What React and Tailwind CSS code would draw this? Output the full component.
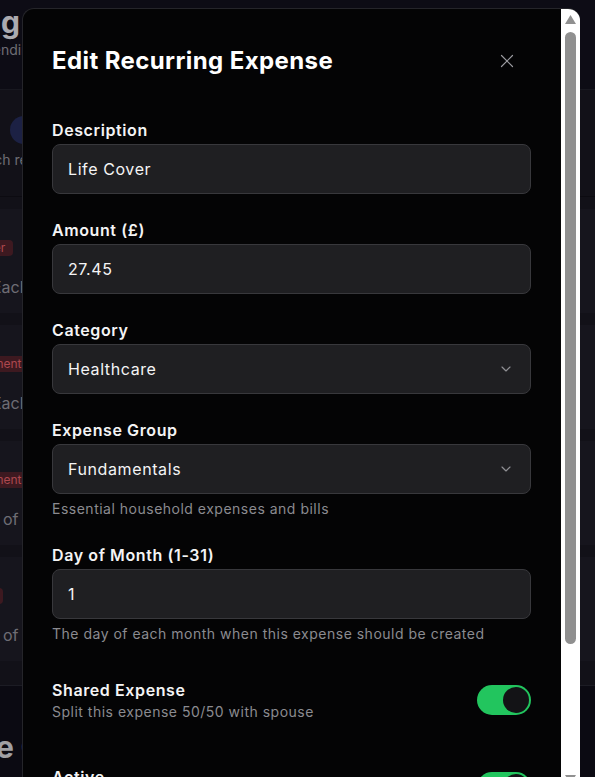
import { X, ChevronDown } from 'lucide-react'

const inputCls =
  'block h-[50px] w-full rounded-lg border border-[#38383c] bg-[#1f1f22] px-[15px] text-base tracking-[0.6px] text-[#f4f4f5] outline-none'

function Field({ label, hint, children }) {
  return (
    <div>
      <label className="block text-base font-semibold leading-6 tracking-[0.6px] text-[#f4f4f5]">{label}</label>
      <div className="mt-[2px]">{children}</div>
      {hint && <p className="mt-[5px] text-sm leading-5 tracking-[0.5px] text-[#8b8b90]">{hint}</p>}
    </div>
  )
}

function SelectBox({ value }) {
  return (
    <button type="button" className={`${inputCls} flex items-center justify-between text-left`}>
      <span>{value}</span>
      <ChevronDown className="mr-[1px] h-4 w-4 text-[#8f8f94]" strokeWidth={1.75} />
    </button>
  )
}

function Toggle({ on }) {
  return (
    <button
      type="button"
      className={`flex h-[30px] w-[54px] shrink-0 items-center rounded-full p-[2px] ${on ? 'bg-[#22c55e]' : 'bg-[#3f3f46]'}`}
    >
      <span className={`h-[26px] w-[26px] rounded-full bg-[#131316] ${on ? 'ml-auto' : ''}`} />
    </button>
  )
}

function ToggleRow({ label, hint, on, className = '' }) {
  return (
    <div className={`flex items-center justify-between ${className}`}>
      <div>
        <p className="text-base font-semibold leading-6 tracking-[0.6px] text-[#f4f4f5]">{label}</p>
        <p className="text-sm leading-5 tracking-[0.5px] text-[#8b8b90]">{hint}</p>
      </div>
      <Toggle on={on} />
    </div>
  )
}

const rows = [
  { group: 'Summer', text: 'Each month' },
  { group: 'Fundamentals', text: 'Each month' },
  { group: 'Fundamentals', text: '1 of each month' },
  { group: 'Family', text: '1 of each month' },
]

function BackgroundPage() {
  return (
    <div className="min-h-screen bg-[#0e0d17]">
      <header className="h-[90px] border-b border-[#1f1e28] bg-[#11101b] pt-[4px]">
        <div className="flex w-[20px] justify-end">
          <h1 className="whitespace-nowrap text-[30px] font-bold leading-9 text-[#d6d6dc]">Recurring</h1>
        </div>
        <div className="flex w-[38px] justify-end">
          <p className="whitespace-nowrap text-sm leading-5 text-[#8a8992]">Track spending</p>
        </div>
      </header>
      <div className="bg-[#17161f] pb-[24px]">
        <div className="flex h-[107px] flex-col justify-center border-b border-[#0f0e16]">
          <div className="ml-[10px] h-[28px] w-[28px] rounded-full bg-[#232a55]" />
          <p className="-ml-[36px] mt-[6px] whitespace-nowrap text-sm text-[#8a8992]">Search recurring</p>
        </div>
        <div className="mt-[12px] flex flex-col gap-[12px]">
          {rows.map((r, i) => (
            <div key={i} className="h-[104px] bg-[#1c1b25] pt-[25px]">
              <span className="-ml-[50px] inline-block whitespace-nowrap rounded bg-[#4d2029] px-2 text-xs leading-4 text-[#d85a62]">
                {r.group}
              </span>
              <p className="-ml-[8px] mt-[17px] whitespace-nowrap text-base text-[#8a8992]">{r.text}</p>
            </div>
          ))}
        </div>
      </div>
      <section className="border-t border-[#24232d] pt-[43px]">
        <h2 className="-ml-[112px] whitespace-nowrap text-[30px] font-bold leading-9 text-[#c8c8ce]">Expense Calendar</h2>
      </section>
    </div>
  )
}

function Scrollbar() {
  return (
    <div className="flex w-[19px] shrink-0 flex-col items-center overflow-hidden bg-white pt-[6px]">
      <svg width="11" height="9" viewBox="0 0 11 9">
        <path d="M5.5 0L11 9H0z" fill="#909090" />
      </svg>
      <div className="mt-[8px] h-[612px] w-[11px] shrink-0 rounded-full bg-[#909090]" />
      <svg width="11" height="9" viewBox="0 0 11 9" className="mt-[131px] shrink-0">
        <path d="M0 0H11L5.5 9z" fill="#909090" />
      </svg>
    </div>
  )
}

export default function App() {
  return (
    <div className="font-[Inter,'Liberation_Sans',sans-serif]">
      <BackgroundPage />
      <div className="fixed inset-0 bg-black/20" />
      <div className="fixed left-[22px] top-[8px] bottom-[-20px] flex w-[558px] overflow-hidden rounded-t-xl border border-r-0 border-[#25252a] bg-[#040405]">
        <div className="flex-1 overflow-hidden pl-[29px] pr-[30px] pt-[36px]">
          <div className="flex items-center justify-between">
            <h2 className="text-2xl font-bold leading-8 tracking-[0.4px] text-white">Edit Recurring Expense</h2>
            <button type="button" className="mr-[8px] flex h-8 w-8 items-center justify-center text-[#9a9a9f]">
              <X className="h-[22px] w-[22px]" strokeWidth={1.3} />
            </button>
          </div>
          <form className="mt-[41px] flex flex-col gap-6">
            <Field label="Description">
              <input className={inputCls} defaultValue="Life Cover" />
            </Field>
            <Field label="Amount (£)">
              <input className={inputCls} defaultValue="27.45" />
            </Field>
            <Field label="Category">
              <SelectBox value="Healthcare" />
            </Field>
            <Field label="Expense Group" hint="Essential household expenses and bills">
              <SelectBox value="Fundamentals" />
            </Field>
            <Field label="Day of Month (1-31)" hint="The day of each month when this expense should be created">
              <input className={inputCls} defaultValue="1" />
            </Field>
            <ToggleRow
              className="pt-[10px]"
              label="Shared Expense"
              hint="Split this expense 50/50 with spouse"
              on
            />
            <ToggleRow
              className="pt-[19px]"
              label="Active"
              hint="Automatically create this expense each month"
              on
            />
          </form>
        </div>
        <Scrollbar />
      </div>
    </div>
  )
}
